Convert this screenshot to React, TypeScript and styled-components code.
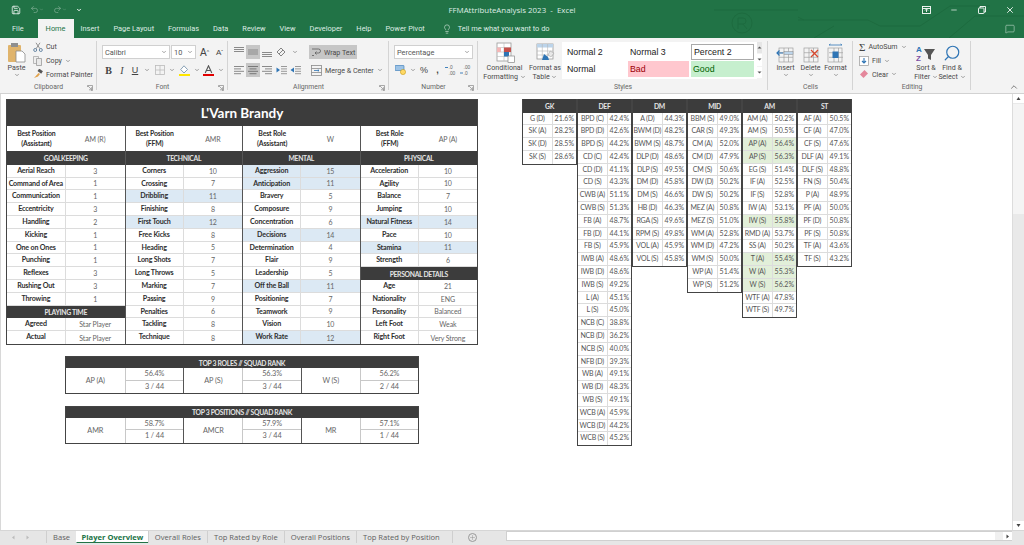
import React from "react";
import styled, { createGlobalStyle } from "styled-components";
import { ChevronDown, ChevronUp, Lightbulb, MessageSquare, Minus, Plus, Save, Search, Undo2, Redo2, X } from "lucide-react";

const GlobalStyle = createGlobalStyle`
  html, body { margin: 0; padding: 0; height: 100%; overflow: hidden; background: #fff; }
  body { font-family: Roboto, "Liberation Sans", sans-serif; }
  * { box-sizing: border-box; }
`;

// ---- data ----
type Stat = { label: string; value: string | number; hot?: boolean };
const s = (label: string, value: string | number): Stat => ({ label, value, hot: typeof value === "number" && value >= 11 && label !== "Age" });

const columns: { best: [string, string, string]; sections: { title: string; rows: Stat[] }[] }[] = [
  {
    best: ["Best Position", "(Assistant)", "AM (R)"],
    sections: [
      { title: "GOALKEEPING", rows: [s("Aerial Reach", 3), s("Command of Area", 1), s("Communication", 1), s("Eccentricity", 3), s("Handling", 2), s("Kicking", 1), s("One on Ones", 1), s("Punching", 1), s("Reflexes", 3), s("Rushing Out", 3), s("Throwing", 1)] },
      { title: "PLAYING TIME", rows: [s("Agreed", "Star Player"), s("Actual", "Star Player")] },
    ],
  },
  {
    best: ["Best Position", "(FFM)", "AMR"],
    sections: [
      { title: "TECHNICAL", rows: [s("Corners", 10), s("Crossing", 7), s("Dribbling", 11), s("Finishing", 8), s("First Touch", 12), s("Free Kicks", 8), s("Heading", 5), s("Long Shots", 7), s("Long Throws", 5), s("Marking", 7), s("Passing", 9), s("Penalties", 6), s("Tackling", 8), s("Technique", 8)] },
    ],
  },
  {
    best: ["Best Role", "(Assistant)", "W"],
    sections: [
      { title: "MENTAL", rows: [s("Aggression", 15), s("Anticipation", 11), s("Bravery", 5), s("Composure", 9), s("Concentration", 6), s("Decisions", 14), s("Determination", 4), s("Flair", 9), s("Leadership", 5), s("Off the Ball", 11), s("Positioning", 7), s("Teamwork", 9), s("Vision", 10), s("Work Rate", 12)] },
    ],
  },
  {
    best: ["Best Role", "(FFM)", "AP (A)"],
    sections: [
      { title: "PHYSICAL", rows: [s("Acceleration", 10), s("Agility", 10), s("Balance", 7), s("Jumping", 10), s("Natural Fitness", 14), s("Pace", 10), s("Stamina", 11), s("Strength", 6)] },
      { title: "PERSONAL DETAILS", rows: [s("Age", 21), s("Nationality", "ENG"), s("Personality", "Balanced"), s("Left Foot", "Weak"), s("Right Foot", "Very Strong")] },
    ],
  },
];

const topTables = [
  { title: "TOP 3 ROLES // SQUAD RANK", items: [["AP (A)", "56.4%", "3 / 44"], ["AP (S)", "56.3%", "3 / 44"], ["W (S)", "56.2%", "2 / 44"]] },
  { title: "TOP 3 POSITIONS // SQUAD RANK", items: [["AMR", "58.7%", "1 / 44"], ["AMCR", "57.9%", "3 / 44"], ["MR", "57.1%", "1 / 44"]] },
];

const HOT = ["AP (A)", "AP (S)", "IW (S)", "T (A)", "W (A)", "W (S)"];
const groups: { title: string; rows: [string, string][] }[] = [
  { title: "GK", rows: [["G (D)", "21.6%"], ["SK (A)", "28.2%"], ["SK (D)", "28.5%"], ["SK (S)", "28.6%"]] },
  { title: "DEF", rows: [["BPD (C)", "42.4%"], ["BPD (D)", "42.6%"], ["BPD (S)", "44.2%"], ["CD (C)", "42.4%"], ["CD (D)", "41.1%"], ["CD (S)", "43.3%"], ["CWB (A)", "51.1%"], ["CWB (S)", "51.3%"], ["FB (A)", "48.7%"], ["FB (D)", "44.1%"], ["FB (S)", "45.9%"], ["IWB (A)", "48.6%"], ["IWB (D)", "48.6%"], ["IWB (S)", "49.2%"], ["L (A)", "45.1%"], ["L (S)", "45.0%"], ["NCB (C)", "38.8%"], ["NCB (D)", "36.2%"], ["NCB (S)", "40.0%"], ["NFB (D)", "39.3%"], ["WB (A)", "49.1%"], ["WB (D)", "48.3%"], ["WB (S)", "49.1%"], ["WCB (A)", "45.9%"], ["WCB (D)", "44.2%"], ["WCB (S)", "45.2%"]] },
  { title: "DM", rows: [["A (D)", "44.3%"], ["BWM (D)", "48.2%"], ["BWM (S)", "48.7%"], ["DLP (D)", "48.6%"], ["DLP (S)", "49.5%"], ["DM (D)", "45.8%"], ["DM (S)", "46.6%"], ["HB (D)", "46.3%"], ["RGA (S)", "49.6%"], ["RPM (S)", "49.8%"], ["VOL (A)", "45.9%"], ["VOL (S)", "45.8%"]] },
  { title: "MID", rows: [["BBM (S)", "49.0%"], ["CAR (S)", "49.3%"], ["CM (A)", "52.0%"], ["CM (D)", "47.9%"], ["CM (S)", "50.6%"], ["DW (D)", "50.2%"], ["DW (S)", "50.2%"], ["MEZ (A)", "50.8%"], ["MEZ (S)", "51.0%"], ["WM (A)", "52.8%"], ["WM (D)", "47.2%"], ["WM (S)", "50.0%"], ["WP (A)", "51.4%"], ["WP (S)", "51.2%"]] },
  { title: "AM", rows: [["AM (A)", "50.2%"], ["AM (S)", "50.5%"], ["AP (A)", "56.4%"], ["AP (S)", "56.3%"], ["EG (S)", "51.4%"], ["IF (A)", "52.5%"], ["IF (S)", "52.8%"], ["IW (A)", "53.1%"], ["IW (S)", "55.8%"], ["RMD (A)", "53.7%"], ["SS (A)", "50.2%"], ["T (A)", "55.4%"], ["W (A)", "55.3%"], ["W (S)", "56.2%"], ["WTF (A)", "47.8%"], ["WTF (S)", "49.7%"]] },
  { title: "ST", rows: [["AF (A)", "50.5%"], ["CF (A)", "47.0%"], ["CF (S)", "47.6%"], ["DLF (A)", "49.1%"], ["DLF (S)", "48.8%"], ["FN (S)", "50.4%"], ["P (A)", "48.9%"], ["PF (A)", "50.0%"], ["PF (D)", "50.8%"], ["PF (S)", "50.8%"], ["TF (A)", "43.6%"], ["TF (S)", "43.2%"]] },
];

const ribbonTabs = ["Insert", "Page Layout", "Formulas", "Data", "Review", "View", "Developer", "Help", "Power Pivot"];
const sheetTabs = ["Base", "Player Overview", "Overall Roles", "Top Rated by Role", "Overall Positions", "Top Rated by Position"];

// ---- window chrome ----
const Page = styled.div`
  width: 1024px;
  height: 545px;
  display: flex;
  flex-direction: column;
  overflow: hidden;
`;
const Chrome = styled.div`
  position: relative;
  height: 38px;
  background: #217346;
  color: #dfece4;
  font-size: 7.4px;
`;
const Circuit = styled.svg`
  position: absolute;
  right: 0;
  top: 0;
`;
const TitleRow = styled.div`
  position: relative;
  height: 19px;
  display: grid;
  grid-template-columns: 1fr auto 1fr;
  align-items: center;
`;
const Quick = styled.div`
  display: flex;
  align-items: center;
  padding-left: 11px;
  gap: 9px;
  color: #fff;
`;
const FadedIcon = styled.span`
  display: flex;
  align-items: center;
  opacity: 0.4;
`;
const DocTitle = styled.div`
  font-family: "Open Sans", sans-serif;
  font-size: 7.9px;
  white-space: pre;
`;
const WindowButtons = styled.div`
  display: flex;
  justify-content: flex-end;
  align-items: center;
  color: #fff;
`;
const WindowBtn = styled.div`
  width: 28px;
  display: flex;
  justify-content: center;
`;
const TabRow = styled.div`
  position: relative;
  height: 19px;
  display: flex;
  align-items: stretch;
  padding-left: 5px;
`;
const RibbonTab = styled.div<{ $active?: boolean }>`
  display: flex;
  align-items: center;
  padding: 0 ${(p) => (p.$active ? 8 : 7)}px;
  margin-left: ${(p) => (p.$active ? "7px" : "0")};
  background: ${(p) => (p.$active ? "#f3f3f3" : "transparent")};
  color: ${(p) => (p.$active ? "#217346" : "#dfece4")};
`;
const TellMe = styled.div`
  display: flex;
  align-items: center;
  gap: 6px;
  margin-left: 10px;
`;
const CommentBtn = styled.div`
  margin-left: auto;
  padding-right: 9px;
  display: flex;
  align-items: center;
`;

// ---- ribbon ----
const Ribbon = styled.div`
  height: 56px;
  display: flex;
  background: #f3f3f3;
  border-bottom: 1px solid #d2d2d2;
  color: #4a4a4a;
  font-size: 7.1px;
`;
const Group = styled.div<{ $w: number }>`
  position: relative;
  width: ${(p) => p.$w}px;
  flex: none;
  display: flex;
  flex-direction: column;
  &::after {
    content: "";
    position: absolute;
    right: 0;
    top: 3px;
    bottom: 3px;
    width: 1px;
    background: #d4d4d4;
  }
`;
const GroupBody = styled.div<{ $pad?: string }>`
  flex: 1;
  display: flex;
  padding: ${(p) => p.$pad || "0"};
  min-height: 0;
`;
const GroupLabel = styled.div`
  height: 12px;
  line-height: 13px;
  text-align: center;
  font-size: 6.8px;
  color: #666;
`;
const Launcher = styled.svg`
  position: absolute;
  right: 4px;
  bottom: 2px;
`;
const BigBtn = styled.div<{ $w: number }>`
  width: ${(p) => p.$w}px;
  flex: none;
  display: flex;
  flex-direction: column;
  align-items: center;
  padding-top: 4px;
  line-height: 9px;
  text-align: center;
  white-space: nowrap;
`;
const BigIcon = styled.div`
  height: 21px;
  display: flex;
  align-items: center;
  justify-content: center;
`;
const Chev = styled(ChevronDown)`
  width: 6px;
  height: 6px;
  color: #666;
  stroke-width: 2.4;
  flex: none;
  vertical-align: -1px;
`;
const SmallCol = styled.div<{ $w?: number }>`
  width: ${(p) => (p.$w ? p.$w + "px" : "auto")};
  display: flex;
  flex-direction: column;
  padding-top: 2px;
`;
const SmallBtn = styled.div`
  height: 14px;
  display: flex;
  align-items: center;
  gap: 3px;
  white-space: nowrap;
`;
const Rows = styled.div`
  display: flex;
  flex-direction: column;
  gap: 4px;
  padding-top: 7px;
`;
const Row = styled.div<{ $gap?: number }>`
  height: 14px;
  display: flex;
  align-items: center;
  gap: ${(p) => p.$gap || 0}px;
`;
const Select = styled.div<{ $w: number }>`
  width: ${(p) => p.$w}px;
  height: 14px;
  padding: 0 2px;
  display: flex;
  align-items: center;
  justify-content: space-between;
  background: #fff;
  border: 1px solid #d0d0d0;
  color: #555;
  font-size: 7.4px;
`;
const Cell = styled.div<{ $w?: number; $on?: boolean }>`
  width: ${(p) => p.$w || 14}px;
  height: 14px;
  flex: none;
  display: flex;
  align-items: center;
  justify-content: center;
  background: ${(p) => (p.$on ? "#c6c6c6" : "transparent")};
  color: #555;
`;
const Letter = styled.span<{ $b?: boolean; $i?: boolean; $u?: boolean; $size?: number; $serif?: boolean }>`
  font-family: ${(p) => (p.$serif ? '"Liberation Serif", serif' : '"Liberation Sans", sans-serif')};
  font-weight: ${(p) => (p.$b ? 700 : 400)};
  font-style: ${(p) => (p.$i ? "italic" : "normal")};
  text-decoration: ${(p) => (p.$u ? "underline" : "none")};
  font-size: ${(p) => p.$size || 9}px;
  color: #444;
`;
const AlignGrid = styled.div`
  display: grid;
  grid-template-columns: repeat(5, 14px);
  grid-auto-rows: 14px;
  row-gap: 4px;
  padding-top: 7px;
`;
const AlignRight = styled.div`
  display: flex;
  flex-direction: column;
  gap: 4px;
  padding: 7px 0 0 7px;
`;
const WrapBtn = styled.div`
  width: 48px;
  height: 14px;
  display: flex;
  align-items: center;
  gap: 3px;
  padding-left: 3px;
  background: #c6c6c6;
  white-space: nowrap;
`;
const MergeBtn = styled(Row)`
  gap: 3px;
  padding-left: 2px;
  white-space: nowrap;
`;
const Gallery = styled.div`
  width: 200px;
  height: 37px;
  margin-top: 4px;
  display: flex;
  background: #fff;
`;
const GalleryGrid = styled.div`
  flex: 1;
  display: grid;
  grid-template-columns: 61px 61px 63px;
  grid-template-rows: 16px 16px;
  column-gap: 2px;
  row-gap: 1px;
  padding: 2px 3px;
`;
const StyleCell = styled.div<{ $bg?: string; $color?: string; $sel?: boolean }>`
  display: flex;
  align-items: center;
  padding-left: 2px;
  font-family: "Liberation Sans", sans-serif;
  font-size: 8.8px;
  background: ${(p) => p.$bg || "transparent"};
  color: ${(p) => p.$color || "#222"};
  border: ${(p) => (p.$sel ? "1.5px solid #aaa" : "none")};
`;
const GalleryScroll = styled.div`
  width: 8px;
  display: flex;
  flex-direction: column;
  background: #f3f3f3;
`;
const ScrollPart = styled.div<{ $off?: boolean }>`
  flex: 1;
  display: flex;
  align-items: center;
  justify-content: center;
  background: ${(p) => (p.$off ? "#e6e6e6" : "#fff")};
  color: #555;
  border-bottom: 1px solid #f3f3f3;
`;
const Collapse = styled.div`
  margin-left: auto;
  align-self: flex-end;
  padding: 0 5px 1px 0;
  color: #666;
  display: flex;
`;

// ---- sheet ----
const SheetArea = styled.div`
  flex: 1;
  min-height: 0;
  display: flex;
`;
const Sheet = styled.div`
  flex: 1;
  display: flex;
  align-items: flex-start;
  padding: 5px 0 0 6px;
  gap: 44px;
  background: #fff;
  font-family: "Lato", "Liberation Sans", sans-serif;
  box-shadow: inset 1px 0 0 #d8d8d8;
`;
const LeftStack = styled.div`
  display: flex;
  flex-direction: column;
`;
const Card = styled.div`
  width: 472px;
  border: 1.5px solid #444;
  background: #fff;
`;
const PlayerName = styled.div`
  height: 26px;
  background: #3c3c3c;
  color: #fff;
  font-size: 13.5px;
  font-weight: 700;
  display: flex;
  align-items: center;
  justify-content: center;
`;
const CardColumns = styled.div`
  display: grid;
  grid-template-columns: repeat(4, 1fr);
`;
const CardColumn = styled.div`
  border-left: 1.5px solid #555;
  &:first-child {
    border-left: none;
  }
`;
const BestRow = styled.div`
  height: 25px;
  display: grid;
  grid-template-columns: 1fr 1fr;
  align-items: center;
`;
const BestLabel = styled.div`
  font-size: 6.9px;
  letter-spacing: -0.15px;
  line-height: 9.4px;
  font-weight: 700;
  color: #2e2e2e;
  text-align: center;
`;
const Value = styled.div`
  font-size: 7px;
  letter-spacing: -0.1px;
  color: #666;
  text-align: center;
`;
const DarkHead = styled.div<{ $h?: number }>`
  height: ${(p) => p.$h || 13.8}px;
  background: #3c3c3c;
  color: #e4e4e4;
  font-size: 6.8px;
  letter-spacing: -0.32px;
  font-weight: 700;
  display: flex;
  align-items: center;
  justify-content: center;
`;
const StatRow = styled.div<{ $hot?: boolean }>`
  height: 12.8px;
  display: grid;
  grid-template-columns: 1fr 1fr;
  align-items: center;
  background: ${(p) => (p.$hot ? "#dce9f4" : "#fff")};
  border-bottom: 1px solid #dcdcdc;
  &:last-child {
    border-bottom: none;
  }
`;
const StatLabel = styled.div`
  height: 100%;
  line-height: 11.8px;
  font-size: 7.1px;
  letter-spacing: -0.15px;
  font-weight: 700;
  color: #2e2e2e;
  text-align: center;
  white-space: nowrap;
  border-right: 1px solid #dcdcdc;
`;
const TopCard = styled.div`
  width: 354px;
  margin: 11.5px 0 0 59px;
  border: 1.5px solid #444;
`;
const TopGrid = styled.div`
  display: grid;
  grid-template-columns: repeat(3, 1fr);
`;
const TopItem = styled.div`
  display: grid;
  grid-template-columns: 1fr 1fr;
  border-left: 1.5px solid #555;
  &:first-child {
    border-left: none;
  }
`;
const TopName = styled(Value)`
  align-self: center;
  font-size: 7.3px;
`;
const TopCells = styled.div`
  border-left: 1px solid #c8c8c8;
`;
const TopCell = styled(Value)`
  height: 12.5px;
  line-height: 11.5px;
  font-size: 7.3px;
  &:first-child {
    border-bottom: 1px solid #c8c8c8;
  }
`;
const RoleTable = styled.div`
  display: flex;
  align-items: flex-start;
`;
const RoleColumn = styled.div`
  width: 55px;
  flex: none;
  border: 1.5px solid #444;
  border-left-width: 0.75px;
  border-right-width: 0.75px;
  border-top: none;
`;
const RoleRow = styled.div<{ $hot?: boolean }>`
  height: 12.8px;
  display: grid;
  grid-template-columns: 56% 44%;
  align-items: center;
  background: ${(p) => (p.$hot ? "#e2efd9" : "#fff")};
  border-bottom: 1px solid #dcdcdc;
  &:last-child {
    border-bottom: none;
  }
`;
const RoleName = styled.div`
  height: 100%;
  line-height: 11.8px;
  font-size: 7px;
  letter-spacing: -0.2px;
  color: #555;
  text-align: center;
  white-space: nowrap;
  border-right: 1px solid #dcdcdc;
`;
const RoleValue = styled(RoleName)`
  letter-spacing: 0;
  border-right: none;
`;
const VScroll = styled.div`
  width: 12px;
  flex: none;
  display: flex;
  flex-direction: column;
  background: #e9e9e9;
  border-left: 1px solid #dcdcdc;
`;
const VArrow = styled.div`
  height: 9px;
  display: flex;
  align-items: center;
  justify-content: center;
  background: #fff;
  color: #444;
`;
const VThumb = styled.div`
  height: 110px;
  margin: 1px 0;
  background: #f4f4f4;
`;
const VSpacer = styled.div`
  flex: 1;
`;

// ---- sheet tabs ----
const TabStrip = styled.div`
  height: 15px;
  flex: none;
  display: flex;
  align-items: flex-start;
  background: #e6e6e6;
  border-top: 1px solid #d6d6d6;
  color: #5f5f5f;
  font-family: "Open Sans", sans-serif;
  font-size: 7.6px;
`;
const NavArrows = styled.div`
  width: 46px;
  height: 12px;
  display: flex;
  align-items: center;
  gap: 9px;
  padding-left: 11px;
  color: #bbb;
`;
const SheetTab = styled.div<{ $active?: boolean }>`
  height: 12px;
  display: flex;
  align-items: center;
  padding: 0 ${(p) => (p.$active ? 4.5 : 6)}px;
  white-space: nowrap;
  background: ${(p) => (p.$active ? "#fff" : "transparent")};
  color: ${(p) => (p.$active ? "#217346" : "#5f5f5f")};
  font-weight: ${(p) => (p.$active ? 700 : 400)};
  border-bottom: ${(p) => (p.$active ? "1.5px solid #217346" : "none")};
  border-left: 1px solid ${(p) => (p.$active ? "transparent" : "#cfcfcf")};
`;
const AddSheet = styled.div`
  height: 12px;
  margin-left: 6px;
  padding-left: 15px;
  border-left: 1px solid #cfcfcf;
  display: flex;
  align-items: center;
  color: #888;
`;
const AddCircle = styled.div`
  width: 9px;
  height: 9px;
  border: 1px solid #999;
  border-radius: 50%;
  display: flex;
  align-items: center;
  justify-content: center;
`;
const HScroll = styled.div`
  margin-left: auto;
  width: 506px;
  height: 10px;
  display: flex;
  background: #fff;
  border: 1px solid #d0d0d0;
  border-right: none;
`;
const HTrack = styled.div`
  flex: 1;
`;
const HEnd = styled.div`
  width: 8px;
  background: #f0f0f0;
`;
const HArrow = styled.div`
  width: 9px;
  background: #fff;
  display: flex;
  align-items: center;
  justify-content: center;
  color: #444;
`;
const Corner = styled.div`
  width: 12px;
  flex: none;
`;

// ---- small drawn icons ----
const Bars = ({ lines, on }: { lines: [number, number][]; on?: boolean }) => (
  <svg width="10" height="10" viewBox="0 0 10 10">
    {lines.map(([x, w], i) => (
      <rect key={i} x={x} y={1 + i * 2.4} width={w} height="1" fill={on ? "#777" : "#8a8a8a"} />
    ))}
  </svg>
);
const VBars = ({ y }: { y: number }) => (
  <svg width="10" height="10" viewBox="0 0 10 10">
    {[0, 1, 2].map((i) => (
      <rect key={i} x="0" y={y + i * 2} width="10" height="1" fill="#8a8a8a" />
    ))}
  </svg>
);
const DialogCorner = () => (
  <Launcher width="6" height="6" viewBox="0 0 6 6">
    <path d="M.5 2V.5H5.500V5.500H4M1 1l3.500 3.500M2 4.800h2.600V2.200" fill="none" stroke="#888" strokeWidth=".7" />
  </Launcher>
);
const PasteIcon = () => (
  <svg width="20" height="21" viewBox="0 0 20 21">
    <rect x="1" y="3" width="13" height="17" rx="1" fill="#e0b46c" />
    <rect x="4" y="1" width="7" height="4" fill="#8f8f8f" />
    <path d="M9 9h6l3 3v8H9z" fill="#fff" stroke="#8a8a8a" strokeWidth=".8" />
  </svg>
);
const Scissors = () => (
  <svg width="10" height="10" viewBox="0 0 10 10" fill="none" stroke="#5a7d9d" strokeWidth=".9">
    <circle cx="2.200" cy="8" r="1.500" />
    <circle cx="7.800" cy="8" r="1.500" />
    <path d="M3 6.800 7 .8M7 6.800 3 .8" stroke="#888" />
  </svg>
);
const CopyIcon = () => (
  <svg width="10" height="10" viewBox="0 0 10 10">
    <path d="M.5.5h5v7h-5z" fill="#eee" stroke="#aaa" strokeWidth=".8" />
    <path d="M3.500 2.500h5v7h-5z" fill="#e9e9e9" stroke="#9a9a9a" strokeWidth=".8" />
  </svg>
);
const PainterIcon = () => (
  <svg width="10" height="10" viewBox="0 0 10 10">
    <rect x="5" y="0.5" width="4.500" height="3" fill="#555" transform="rotate(35 7 2)" />
    <path d="M5.500 4 1 9l4-1.500L7 5z" fill="#e2a24a" />
  </svg>
);
const BorderIcon = () => (
  <svg width="10" height="10" viewBox="0 0 10 10" fill="none" stroke="#bbb" strokeWidth=".8">
    <rect x=".5" y=".5" width="9" height="9" />
    <path d="M5 .5v9M.5 5h9" />
  </svg>
);
const FillIcon = () => (
  <svg width="11" height="11" viewBox="0 0 11 11">
    <path d="M5 .8 8.500 4.500 5 8 1.700 4.500z" fill="#fff" stroke="#6b8aa5" strokeWidth=".8" />
    <rect x="0" y="9" width="11" height="2" fill="#ffe600" />
  </svg>
);
const FontColorIcon = () => (
  <svg width="11" height="11" viewBox="0 0 11 11">
    <path d="M2.200 8 5.500.8 8.800 8M3.500 5.500h4" fill="none" stroke="#555" strokeWidth="1.100" />
    <rect x="0" y="9" width="11" height="2" fill="#e10000" />
  </svg>
);
const OrientIcon = () => (
  <svg width="10" height="10" viewBox="0 0 10 10" fill="none" stroke="#777" strokeWidth=".9">
    <path d="M1 5 5 1l4 4-4 4zM3 7l4-4" />
  </svg>
);
const IndentIcon = ({ flip }: { flip?: boolean }) => (
  <svg width="11" height="10" viewBox="0 0 11 10">
    {[1, 3.4, 5.8, 8.2].map((y) => (
      <rect key={y} x="5" y={y} width="6" height="1" fill="#999" />
    ))}
    <path d={flip ? "M4 2.500v5L.5 5z" : "M.5 2.500v5L4 5z"} fill="#2f75b5" />
  </svg>
);
const WrapIcon = () => (
  <svg width="9" height="10" viewBox="0 0 9 10" fill="none" stroke="#666" strokeWidth=".9">
    <path d="M0 2h6.500a1.500 1.500 0 0 1 0 4H3M4.500 4.500 3 6l1.500 1.500M0 8.500h2" />
  </svg>
);
const MergeIcon = () => (
  <svg width="11" height="11" viewBox="0 0 11 11" fill="none" stroke="#8a8a8a" strokeWidth=".8">
    <rect x=".5" y=".5" width="10" height="10" />
    <path d="M.5 3.500h10M.5 7.500h10" />
    <path d="M3 5.500h5M6.800 4.500 8 5.500 6.800 6.500" stroke="#2f75b5" />
  </svg>
);
const AccountingIcon = () => (
  <svg width="12" height="10" viewBox="0 0 12 10">
    <rect x="0" y="0.5" width="9" height="5" rx=".5" fill="#9dc3e6" stroke="#2f75b5" strokeWidth=".6" />
    <circle cx="8" cy="7" r="2.600" fill="#ffd966" stroke="#bf9000" strokeWidth=".5" />
  </svg>
);
const DecimalIcon = ({ top, bottom, arrowTop }: { top: string; bottom: string; arrowTop?: boolean }) => (
  <svg width="13" height="11" viewBox="0 0 13 11">
    <path d={arrowTop ? "M0 2.500h3" : "M0 8h3"} stroke="#2f75b5" strokeWidth=".9" />
    <text x="3.600" y="4.400" fontSize="4.800" fontFamily="Liberation Sans" fill="#666">{top}</text>
    <text x="3.600" y="10" fontSize="4.800" fontFamily="Liberation Sans" fill="#666">{bottom}</text>
  </svg>
);
const CondIcon = () => (
  <svg width="20" height="21" viewBox="0 0 20 21">
    <rect x="2" y="1" width="14" height="18" fill="#fff" stroke="#999" strokeWidth=".8" />
    <path d="M2 5.500h14M2 10h14M2 14.500h14M9 1v18" stroke="#bbb" strokeWidth=".6" />
    <rect x="9" y="5.500" width="7" height="4.500" fill="#c5504b" />
    <rect x="9" y="10" width="5" height="4.500" fill="#2f75b5" />
    <rect x="2" y="5.500" width="4" height="4.500" fill="#f4b6b6" />
    <rect x="13" y="14" width="6.500" height="6.500" fill="#fff" stroke="#888" strokeWidth=".7" />
  </svg>
);
const TableIcon = () => (
  <svg width="19" height="20" viewBox="0 0 19 20">
    <rect x="1" y="1" width="16" height="15" fill="#fff" stroke="#999" strokeWidth=".8" />
    <rect x="1" y="1" width="16" height="3.500" fill="#bcd4ea" />
    <path d="M1 8h16M1 12h16M6.300 1v15M11.600 1v15" stroke="#b5b5b5" strokeWidth=".6" />
    <path d="M8 11 6 17h7l-1-3z" fill="#2f75b5" />
    <path d="m14 8 4 2-3 4-3-2z" fill="#e8e8e8" stroke="#999" strokeWidth=".5" />
  </svg>
);
const CellsIcon = ({ kind }: { kind: "insert" | "delete" | "format" }) => (
  <svg width="19" height="20" viewBox="0 0 19 20">
    <g stroke="#a0a0a0" strokeWidth=".7" fill="none">
      <rect x={kind === "format" ? 2 : 3} y="5" width="14" height="14" />
      <path d="M3 9.700h14M3 14.300h14M8 5v14M12.500 5v14" />
    </g>
    {kind === "insert" && <rect x="8" y="8.500" width="9" height="3" fill="#bcd4ea" stroke="#8a8a8a" strokeWidth=".5" />}
    {kind === "insert" && <path d="M1 10h6M3.500 7.500 1 10l2.500 2.500" fill="none" stroke="#2f75b5" strokeWidth="1.200" />}
    {kind === "delete" && <path d="m10 7 7 7M17 7l-7 7" stroke="#d8482e" strokeWidth="1.300" />}
    {kind === "format" && <rect x="6.500" y="8.500" width="6" height="6.500" fill="#2f75b5" />}
    {kind === "format" && <path d="M3 2h13M3 2l1.500-1M16 2l-1.500-1" stroke="#2f75b5" strokeWidth=".8" fill="none" />}
  </svg>
);
const SumIcon = () => <Letter $size={11} $serif>Σ</Letter>;
const FillDown = () => (
  <svg width="10" height="10" viewBox="0 0 10 10">
    <rect x=".5" y=".5" width="9" height="9" fill="#fff" stroke="#999" strokeWidth=".7" />
    <path d="M5 2v5M3 5l2 2 2-2" fill="none" stroke="#2f75b5" strokeWidth="1.100" />
  </svg>
);
const EraserIcon = () => (
  <svg width="10" height="10" viewBox="0 0 10 10">
    <path d="m5.500 1 3.500 3.500-4.500 4.500L1 5.500z" fill="#e4879b" />
  </svg>
);
const SortIcon = () => (
  <svg width="21" height="18" viewBox="0 0 21 18">
    <text x="0" y="8" fontSize="8" fontFamily="Liberation Sans" fontWeight="700" fill="#2f75b5">A</text>
    <text x="0" y="17" fontSize="8" fontFamily="Liberation Sans" fontWeight="700" fill="#7a4fa3">Z</text>
    <path d="M8 5h11l-4 6v5l-3-1.500V11z" fill="#555" />
  </svg>
);
const RestoreIcon = () => (
  <svg width="8" height="8" viewBox="0 0 8 8" fill="none" stroke="#fff" strokeWidth=".9">
    <rect x=".5" y="2" width="5.500" height="5.500" rx=".6" />
    <path d="M2 2V.5h5.500V6H6" />
  </svg>
);
const DisplayIcon = () => (
  <svg width="9" height="8" viewBox="0 0 9 8" fill="none" stroke="#fff" strokeWidth=".9">
    <rect x=".5" y=".5" width="8" height="7" />
    <path d="M.5 2.500h8M4.500 6V3.500M3 4.500l1.500-1.500L6 4.500" />
  </svg>
);
const Tri = ({ d }: { d: string }) => (
  <svg width="5" height="5" viewBox="0 0 5 5">
    <path d={d} fill="currentColor" />
  </svg>
);

const App = () => {
  return (
    <Page>
      <GlobalStyle />
      <Chrome>
        <Circuit width="310" height="38" viewBox="0 0 310 38" fill="none" stroke="#1d6b3f" strokeWidth="1">
          <circle cx="28" cy="23" r="10" />
          <path d="M24 29v-11h5a3 3 0 0 1 0 6h-5M29 24l4 5M0 10h84M84 20h70l12 6h40l30-20h40M90 20l-6-3M100 38l20-12M235 38l26-22h49" />
        </Circuit>
        <TitleRow>
          <Quick>
            <Save size={10} strokeWidth={1.8} />
            <FadedIcon><Undo2 size={9} /><ChevronDown size={5} /></FadedIcon>
            <FadedIcon><Redo2 size={9} /><ChevronDown size={5} /></FadedIcon>
            <ChevronDown size={6} strokeWidth={4} />
          </Quick>
          <DocTitle>FFMAttributeAnalysis 2023  -  Excel</DocTitle>
          <WindowButtons>
            <WindowBtn><DisplayIcon /></WindowBtn>
            <WindowBtn><Minus size={8} /></WindowBtn>
            <WindowBtn><RestoreIcon /></WindowBtn>
            <WindowBtn><X size={10} /></WindowBtn>
          </WindowButtons>
        </TitleRow>
        <TabRow>
          <RibbonTab>File</RibbonTab>
          <RibbonTab $active>Home</RibbonTab>
          {ribbonTabs.map((t) => (
            <RibbonTab key={t}>{t}</RibbonTab>
          ))}
          <TellMe>
            <Lightbulb size={10} strokeWidth={1.4} />
            Tell me what you want to do
          </TellMe>
          <CommentBtn>
            <MessageSquare size={10} strokeWidth={1.2} />
          </CommentBtn>
        </TabRow>
      </Chrome>

      <Ribbon>
        <Group $w={97}>
          <GroupBody>
            <BigBtn $w={33}>
              <BigIcon><PasteIcon /></BigIcon>
              Paste
              <Chev />
            </BigBtn>
            <SmallCol>
              <SmallBtn><Scissors /> Cut</SmallBtn>
              <SmallBtn><CopyIcon /> Copy <Chev /></SmallBtn>
              <SmallBtn><PainterIcon /> Format Painter</SmallBtn>
            </SmallCol>
          </GroupBody>
          <GroupLabel>Clipboard</GroupLabel>
          <DialogCorner />
        </Group>

        <Group $w={131}>
          <GroupBody $pad="0 0 0 5px">
            <Rows>
              <Row $gap={1}>
                <Select $w={68}>Calibri <Chev /></Select>
                <Select $w={25}>10 <Chev /></Select>
                <Cell $w={15}><Letter $size={10}>A</Letter><Letter $size={5}>^</Letter></Cell>
                <Cell $w={13}><Letter $size={8}>A</Letter><Letter $size={5}>ˇ</Letter></Cell>
              </Row>
              <Row>
                <Cell $w={13}><Letter $b $serif $size={10}>B</Letter></Cell>
                <Cell $w={14}><Letter $i $serif $size={10}>I</Letter></Cell>
                <Cell $w={12}><Letter $u $size={9}>U</Letter></Cell>
                <Cell $w={11}><Chev /></Cell>
                <Cell $w={15}><BorderIcon /></Cell>
                <Cell $w={9}><Chev /></Cell>
                <Cell $w={16}><FillIcon /></Cell>
                <Cell $w={9}><Chev /></Cell>
                <Cell $w={15}><FontColorIcon /></Cell>
                <Cell $w={9}><Chev /></Cell>
              </Row>
            </Rows>
          </GroupBody>
          <GroupLabel>Font</GroupLabel>
          <DialogCorner />
        </Group>

        <Group $w={161}>
          <GroupBody $pad="0 0 0 4px">
            <AlignGrid>
              <Cell><VBars y={0} /></Cell>
              <Cell $on><VBars y={2.5} /></Cell>
              <Cell><VBars y={5} /></Cell>
              <Cell><OrientIcon /></Cell>
              <Cell><Chev /></Cell>
              <Cell><Bars lines={[[0, 10], [0, 7], [0, 10], [0, 7]]} /></Cell>
              <Cell $on><Bars on lines={[[0, 10], [1.5, 7], [0, 10], [1.5, 7]]} /></Cell>
              <Cell><Bars lines={[[0, 10], [3, 7], [0, 10], [3, 7]]} /></Cell>
              <Cell><IndentIcon /></Cell>
              <Cell><IndentIcon flip /></Cell>
            </AlignGrid>
            <AlignRight>
              <WrapBtn><WrapIcon /> Wrap Text</WrapBtn>
              <MergeBtn><MergeIcon /> Merge &amp; Center <Chev /></MergeBtn>
            </AlignRight>
          </GroupBody>
          <GroupLabel>Alignment</GroupLabel>
          <DialogCorner />
        </Group>

        <Group $w={89}>
          <GroupBody $pad="0 0 0 5px">
            <Rows>
              <Select $w={79}>Percentage <Chev /></Select>
              <Row>
                <Cell $w={14}><AccountingIcon /></Cell>
                <Cell $w={9}><Chev /></Cell>
                <Cell $w={14}><Letter $size={9}>%</Letter></Cell>
                <Cell $w={13}><Letter $b $size={9}>,</Letter></Cell>
                <Cell $w={15}><DecimalIcon arrowTop top=".0" bottom=".00" /></Cell>
                <Cell $w={15}><DecimalIcon top=".00" bottom=".0" /></Cell>
              </Row>
            </Rows>
          </GroupBody>
          <GroupLabel>Number</GroupLabel>
          <DialogCorner />
        </Group>

        <Group $w={290}>
          <GroupBody $pad="0 0 0 3px">
            <BigBtn $w={47}>
              <BigIcon><CondIcon /></BigIcon>
              Conditional
              <span>Formatting <Chev /></span>
            </BigBtn>
            <BigBtn $w={34}>
              <BigIcon><TableIcon /></BigIcon>
              Format as
              <span>Table <Chev /></span>
            </BigBtn>
            <Gallery>
              <GalleryGrid>
                <StyleCell>Normal 2</StyleCell>
                <StyleCell>Normal 3</StyleCell>
                <StyleCell $sel>Percent 2</StyleCell>
                <StyleCell>Normal</StyleCell>
                <StyleCell $bg="#ffc7ce" $color="#9c0006">Bad</StyleCell>
                <StyleCell $bg="#c6efce" $color="#006100">Good</StyleCell>
              </GalleryGrid>
              <GalleryScroll>
                <ScrollPart $off><Tri d="M2.500 1.500 4.500 3.500H.5z" /></ScrollPart>
                <ScrollPart><Tri d="M.5 1.500h4L2.500 3.500z" /></ScrollPart>
                <ScrollPart><Tri d="M.5 1.500h4L2.500 3.500z" /></ScrollPart>
              </GalleryScroll>
            </Gallery>
          </GroupBody>
          <GroupLabel>Styles</GroupLabel>
        </Group>

        <Group $w={85}>
          <GroupBody $pad="0 0 0 5px">
            <BigBtn $w={25}><BigIcon><CellsIcon kind="insert" /></BigIcon>Insert<Chev /></BigBtn>
            <BigBtn $w={25}><BigIcon><CellsIcon kind="delete" /></BigIcon>Delete<Chev /></BigBtn>
            <BigBtn $w={25}><BigIcon><CellsIcon kind="format" /></BigIcon>Format<Chev /></BigBtn>
          </GroupBody>
          <GroupLabel>Cells</GroupLabel>
        </Group>

        <Group $w={118}>
          <GroupBody $pad="0 0 0 6px">
            <SmallCol $w={54}>
              <SmallBtn><SumIcon /> AutoSum <Chev /></SmallBtn>
              <SmallBtn><FillDown /> Fill <Chev /></SmallBtn>
              <SmallBtn><EraserIcon /> Clear <Chev /></SmallBtn>
            </SmallCol>
            <BigBtn $w={26}>
              <BigIcon><SortIcon /></BigIcon>
              Sort &amp;
              <span>Filter <Chev /></span>
            </BigBtn>
            <BigBtn $w={26}>
              <BigIcon><Search size={18} color="#2f75b5" strokeWidth={1.6} style={{ transform: "scaleX(-1)" }} /></BigIcon>
              Find &amp;
              <span>Select <Chev /></span>
            </BigBtn>
          </GroupBody>
          <GroupLabel>Editing</GroupLabel>
        </Group>

        <Collapse><ChevronUp size={10} /></Collapse>
      </Ribbon>

      <SheetArea>
        <Sheet>
          <LeftStack>
            <Card>
              <PlayerName>L'Varn Brandy</PlayerName>
              <CardColumns>
                {columns.map((c) => (
                  <CardColumn key={c.sections[0].title}>
                    <BestRow>
                      <BestLabel>{c.best[0]}<br />{c.best[1]}</BestLabel>
                      <Value>{c.best[2]}</Value>
                    </BestRow>
                    {c.sections.map((sec) => (
                      <React.Fragment key={sec.title}>
                        <DarkHead $h={sec.title === "PLAYING TIME" || sec.title === "PERSONAL DETAILS" ? 12.8 : 13.8}>{sec.title}</DarkHead>
                        {sec.rows.map((r) => (
                          <StatRow key={r.label} $hot={r.hot}>
                            <StatLabel>{r.label}</StatLabel>
                            <Value>{r.value}</Value>
                          </StatRow>
                        ))}
                      </React.Fragment>
                    ))}
                  </CardColumn>
                ))}
              </CardColumns>
            </Card>
            {topTables.map((t) => (
              <TopCard key={t.title}>
                <DarkHead $h={11}>{t.title}</DarkHead>
                <TopGrid>
                  {t.items.map((it) => (
                    <TopItem key={it[0]}>
                      <TopName>{it[0]}</TopName>
                      <TopCells>
                        <TopCell>{it[1]}</TopCell>
                        <TopCell>{it[2]}</TopCell>
                      </TopCells>
                    </TopItem>
                  ))}
                </TopGrid>
              </TopCard>
            ))}
          </LeftStack>
          <RoleTable>
            {groups.map((g) => (
              <RoleColumn key={g.title}>
                <DarkHead $h={13.5}>{g.title}</DarkHead>
                {g.rows.map(([name, pct]) => {
                  const hot = g.title === "AM" && HOT.includes(name);
                  return (
                    <RoleRow key={name} $hot={hot}>
                      <RoleName>{name}</RoleName>
                      <RoleValue>{pct}</RoleValue>
                    </RoleRow>
                  );
                })}
              </RoleColumn>
            ))}
          </RoleTable>
        </Sheet>
        <VScroll>
          <VArrow><Tri d="M2.500 1 4.500 4H.5z" /></VArrow>
          <VThumb />
          <VSpacer />
          <VArrow><Tri d="M.5 1h4L2.500 4z" /></VArrow>
        </VScroll>
      </SheetArea>

      <TabStrip>
        <NavArrows>
          <Tri d="M3.500.5v4L1 2.500z" />
          <Tri d="M1.500.5v4L4 2.500z" />
        </NavArrows>
        {sheetTabs.map((t) => (
          <SheetTab key={t} $active={t === "Player Overview"}>{t}</SheetTab>
        ))}
        <AddSheet>
          <AddCircle><Plus size={7} strokeWidth={1.5} /></AddCircle>
        </AddSheet>
        <HScroll>
          <HTrack />
          <HEnd />
          <HArrow><Tri d="M1.500.5v4L4 2.500z" /></HArrow>
        </HScroll>
        <Corner />
      </TabStrip>
    </Page>
  );
};

export default App;
